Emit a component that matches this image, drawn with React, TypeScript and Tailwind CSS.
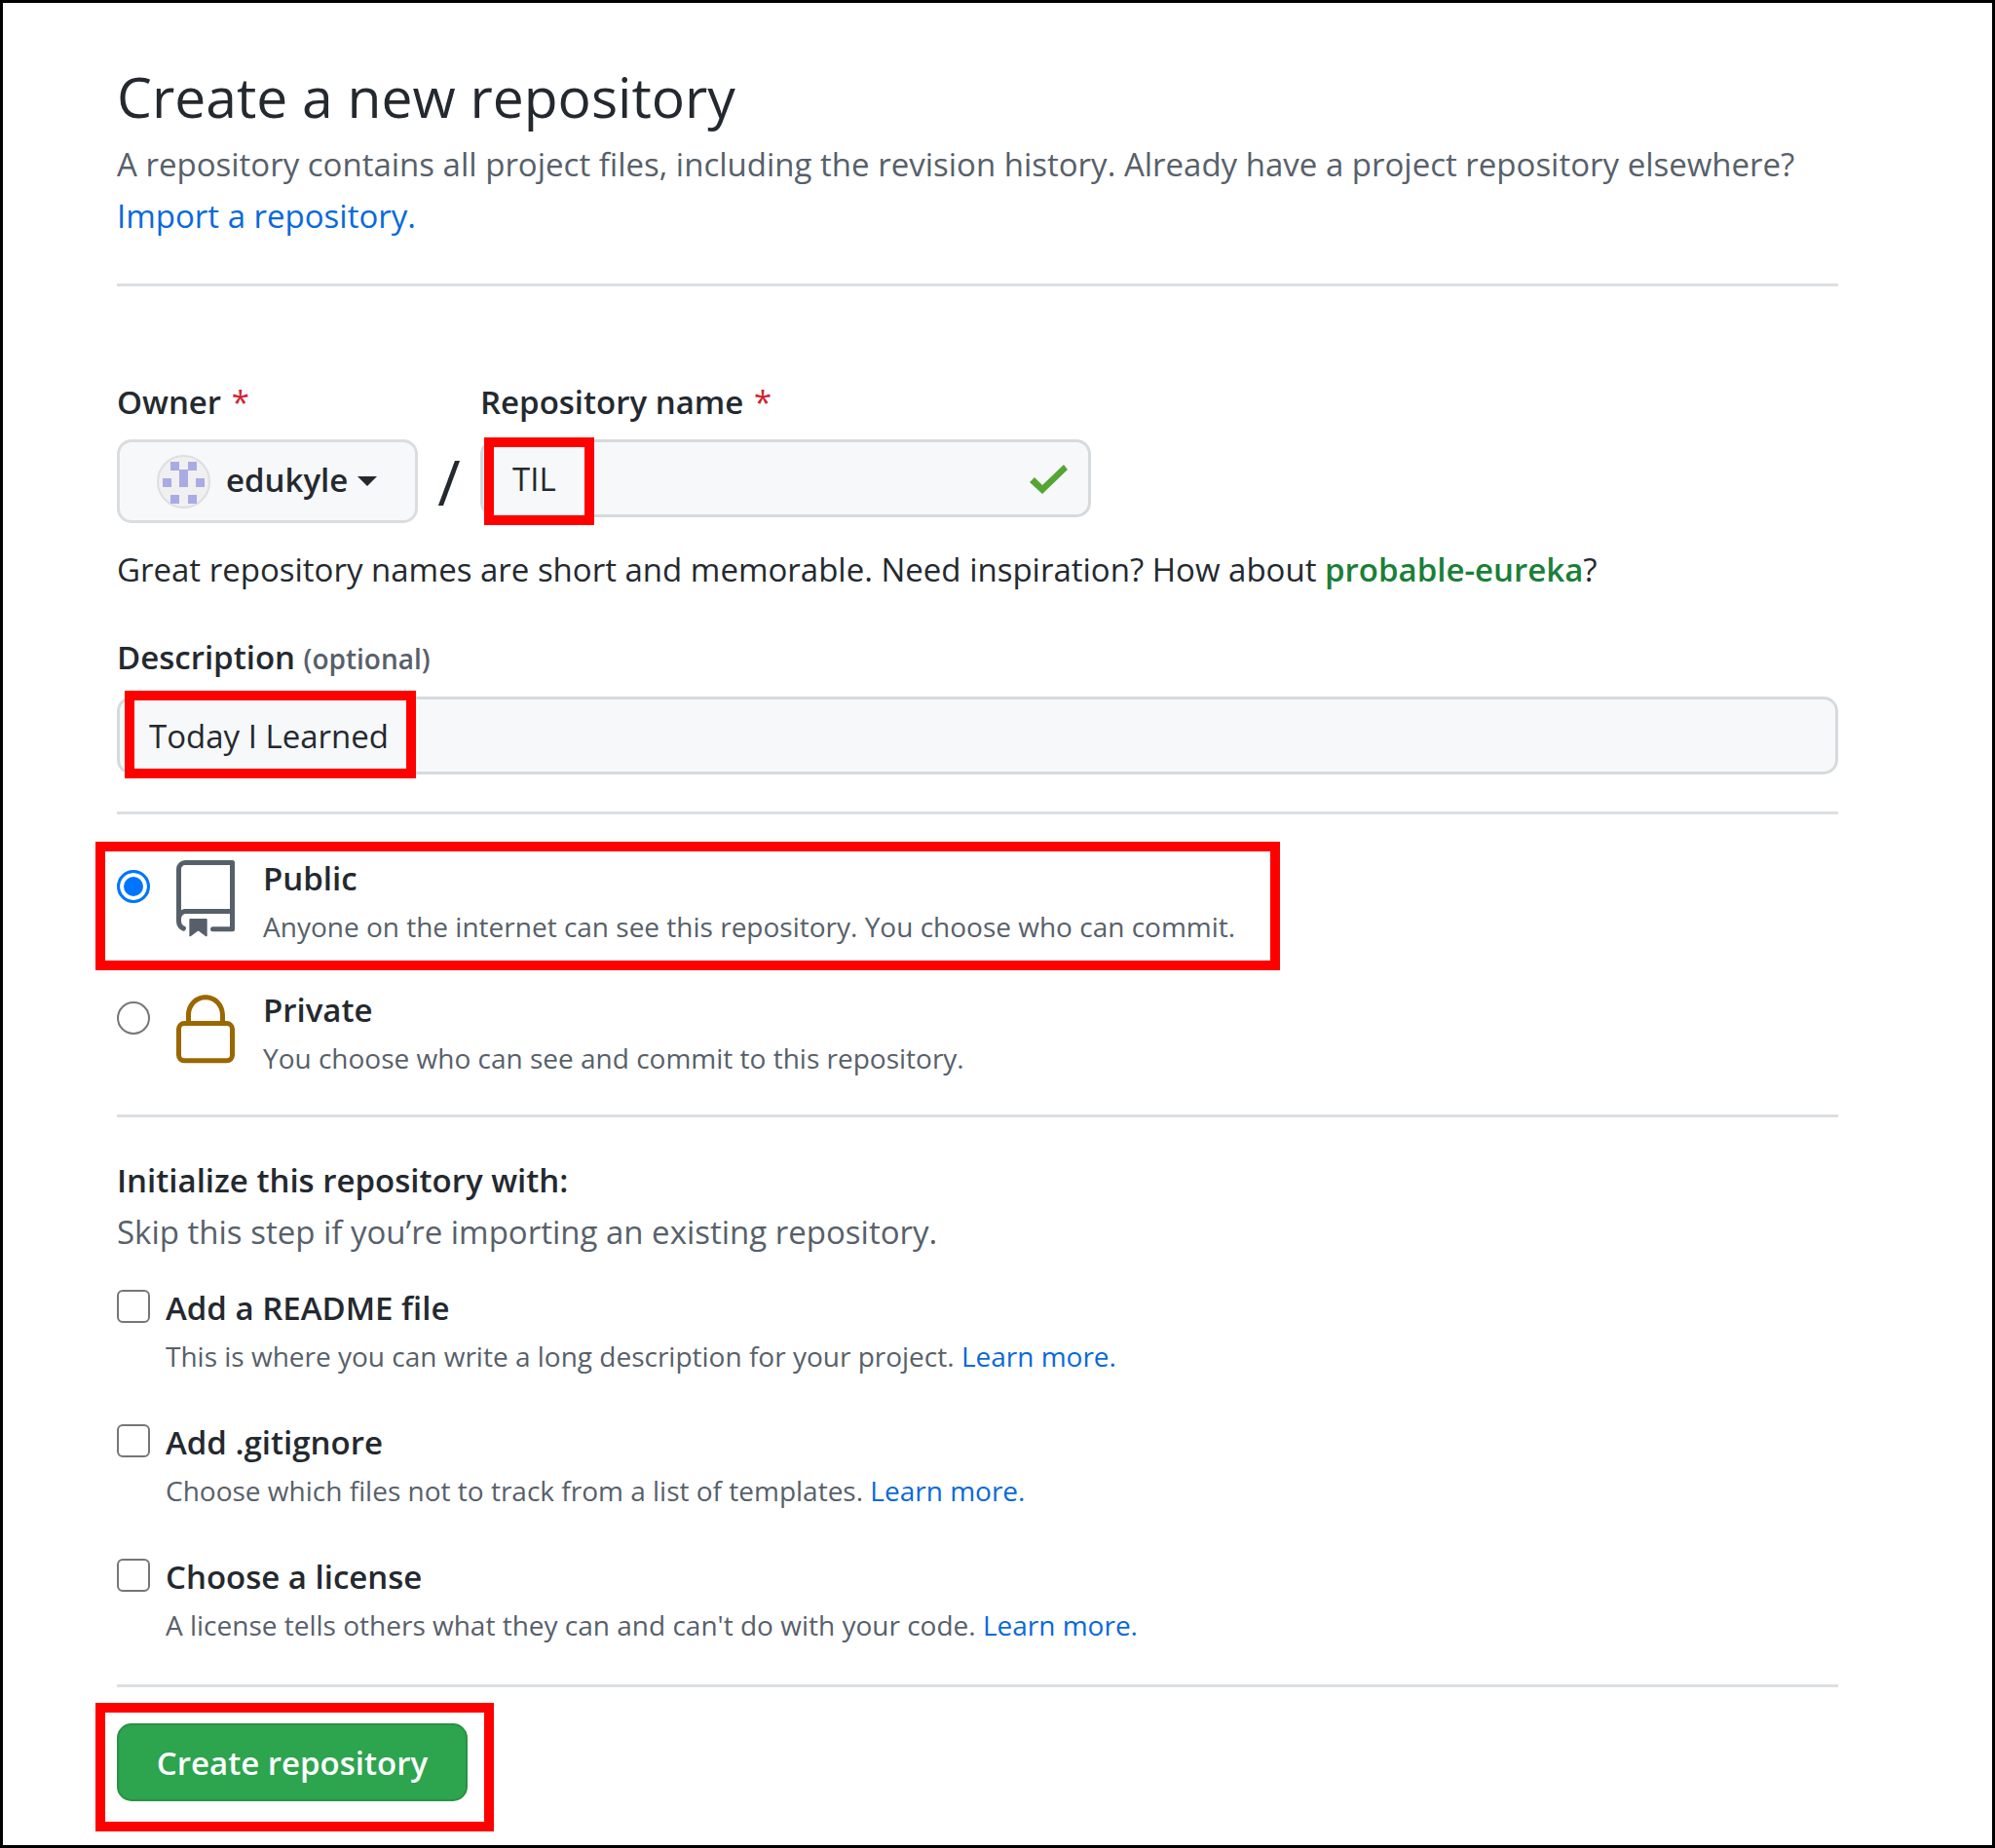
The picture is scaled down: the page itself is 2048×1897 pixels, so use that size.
import React, { useState } from 'react';

const initOptions = [
  {
    id: 'readme',
    label: 'Add a README file',
    note: 'This is where you can write a long description for your project.',
  },
  {
    id: 'gitignore',
    label: 'Add .gitignore',
    note: 'Choose which files not to track from a list of templates.',
  },
  {
    id: 'license',
    label: 'Choose a license',
    note: "A license tells others what they can and can't do with your code.",
  },
];

function RepoIcon() {
  return (
    <svg viewBox="0 0 24 24" className="w-20 h-20 shrink-0 fill-[#57606a]" aria-hidden="true">
      <path
        fillRule="evenodd"
        d="M3 2.75A2.75 2.75 0 015.75 0h14.5a.75.75 0 01.75.75v20.5a.75.75 0 01-.75.75h-6a.75.75 0 010-1.5h5.25v-4H6A1.5 1.5 0 004.5 18v.75c0 .716.43 1.334 1.05 1.605a.75.75 0 01-.6 1.374A3.25 3.25 0 013 18.75v-16zM19.5 1.5V15H6c-.546 0-1.059.146-1.5.401V2.75c0-.69.56-1.25 1.25-1.25H19.5z"
      />
      <path d="M7 18.25a.25.25 0 01.25-.25h5a.25.25 0 01.25.25v5.01a.25.25 0 01-.397.201l-2.206-1.604a.25.25 0 00-.294 0L7.397 23.46a.25.25 0 01-.397-.2v-5.01z" />
    </svg>
  );
}

function LockIcon() {
  return (
    <svg viewBox="0 0 24 24" className="w-20 h-20 shrink-0 fill-[#9a6700]" aria-hidden="true">
      <path
        fillRule="evenodd"
        d="M6 9V7.25C6 3.845 8.503 1 12 1s6 2.845 6 6.25V9h.5a2.5 2.5 0 012.5 2.5v8a2.5 2.5 0 01-2.5 2.5h-13A2.5 2.5 0 013 19.5v-8A2.5 2.5 0 015.5 9H6zm1.5-1.75C7.5 4.58 9.422 2.5 12 2.5c2.578 0 4.5 2.08 4.5 4.75V9h-9V7.25zm-3 4.25a1 1 0 011-1h13a1 1 0 011 1v8a1 1 0 01-1 1h-13a1 1 0 01-1-1v-8z"
      />
    </svg>
  );
}

function Avatar() {
  return (
    <svg viewBox="0 0 55 55" className="w-[55px] h-[55px] shrink-0" aria-hidden="true">
      <circle cx="27.5" cy="27.5" r="26.5" fill="#f0f0f1" stroke="#dcdfe1" strokeWidth="2" />
      <g fill="#a9abe4">
        <rect x="14" y="7" width="9" height="9" />
        <rect x="32" y="7" width="9" height="9" />
        <rect x="23" y="15" width="9" height="18" />
        <rect x="6" y="24" width="9" height="9" />
        <rect x="40" y="24" width="9" height="9" />
        <rect x="14" y="41" width="9" height="9" />
        <rect x="32" y="41" width="9" height="9" />
      </g>
    </svg>
  );
}

function Divider({ className }: { className: string }) {
  return <hr className={`border-0 h-[3px] bg-[#dcdfe2] ${className}`} />;
}

// Red frame drawn over the part of the form to fill in
function Highlight({ className }: { className: string }) {
  return <div className={`absolute border-[10px] border-[#ff0000] pointer-events-none ${className}`} />;
}

export default function App() {
  const [name, setName] = useState('TIL');
  const [description, setDescription] = useState('Today I Learned');
  const [visibility, setVisibility] = useState('public');

  const radioClass =
    'appearance-none w-[34px] h-[34px] mt-4 shrink-0 rounded-full border-2 border-[#767676] checked:border-[3px] checked:border-[#0075ff] checked:bg-[#0075ff] checked:shadow-[inset_0_0_0_4px_#fff]';

  return (
    <main className="min-h-screen border-[3px] border-black bg-white pl-[117px] pr-[158px] pt-[61px] pb-10 font-['Open_Sans','Noto_Sans',sans-serif] text-[33px] leading-[53px] text-[#24292f]">
      <h1 className="text-[57px] leading-[70px] font-normal">Create a new repository</h1>
      <p className="mt-2 text-[#57606a]">
        A repository contains all project files, including the revision history. Already have a project repository
        elsewhere?{' '}
        <a href="#import" className="block text-[#0969da]">Import a repository.</a>
      </p>

      <Divider className="mt-[43px]" />

      <form onSubmit={(e) => e.preventDefault()}>
        <div className="mt-[92px] flex items-start">
          <div className="w-[309px]">
            <label htmlFor="owner" className="block font-semibold">
              Owner <span className="ml-0.5 font-normal text-[#cf222e]">*</span>
            </label>
            <div className="mt-3 h-[86px] flex items-center pl-[38px] border-[3px] border-[#dadde0] rounded-[15px] bg-[#f6f8fa]">
              <Avatar />
              <select
                id="owner"
                className="appearance-none field-sizing-content ml-4 pb-1 bg-transparent font-semibold outline-none"
                defaultValue="edukyle"
              >
                <option value="edukyle">edukyle</option>
              </select>
              <svg viewBox="0 0 20 10" className="ml-2.5 w-5 h-[10px] fill-[#24292f]" aria-hidden="true">
                <path d="M0 0h20L10 10z" />
              </svg>
            </div>
          </div>

          <span className="w-16 mt-[84px] text-center text-[64px] leading-[50px]">/</span>

          <div className="w-[627px]">
            <label htmlFor="repo-name" className="block font-semibold">
              Repository name <span className="ml-0.5 font-normal text-[#cf222e]">*</span>
            </label>
            <div className="relative mt-3">
              <input
                id="repo-name"
                type="text"
                value={name}
                onChange={(e) => setName(e.target.value)}
                className="block w-full h-20 pl-[30px] pr-16 border-[3px] border-[#d6dadd] rounded-[15px] bg-[#f6f8fa] outline-none"
              />
              <svg viewBox="0 0 39 30" className="absolute right-6 top-[26px] w-[39px] h-[30px] fill-[#55a532]" aria-hidden="true">
                <path d="M35 0l4 5-26 25L0 18l5-5 8 8z" />
              </svg>
              <Highlight className="left-1 -top-0.5 w-[113px] h-[90px]" />
            </div>
          </div>
        </div>

        <p className="mt-[21px]">
          Great repository names are short and memorable. Need inspiration? How about{' '}
          <strong className="font-semibold text-[#1a7f37]">probable-eureka</strong>?
        </p>

        <label htmlFor="repo-description" className="mt-[37px] block font-semibold">
          Description <span className="text-[28px] leading-none text-[#57606a]">(optional)</span>
        </label>
        <div className="relative mt-3.5">
          <input
            id="repo-description"
            type="text"
            value={description}
            onChange={(e) => setDescription(e.target.value)}
            className="block w-full h-20 px-[30px] border-[3px] border-[#d6dadd] rounded-[15px] bg-[#f6f8fa] outline-none"
          />
          <Highlight className="left-2 -top-1.5 w-[299px] h-[90px]" />
        </div>

        <Divider className="mt-[38px]" />

        <div className="relative mt-[41px] flex items-start">
          <input
            id="public"
            type="radio"
            name="visibility"
            checked={visibility === 'public'}
            onChange={() => setVisibility('public')}
            className={radioClass}
          />
          <div className="ml-[17px] mt-1.5">
            <RepoIcon />
          </div>
          <div className="ml-[19px]">
            <label htmlFor="public" className="block leading-[50px] font-semibold">Public</label>
            <p className="text-[28px] leading-[48px] text-[#57606a]">
              Anyone on the internet can see this repository. You choose who can commit.
            </p>
          </div>
          <Highlight className="-left-[22px] -top-[13px] w-[1216px] h-[132px]" />
        </div>

        <div className="mt-[37px] flex items-start">
          <input
            id="private"
            type="radio"
            name="visibility"
            checked={visibility === 'private'}
            onChange={() => setVisibility('private')}
            className={radioClass}
          />
          <div className="ml-[17px] mt-1.5">
            <LockIcon />
          </div>
          <div className="ml-[19px]">
            <label htmlFor="private" className="block leading-[50px] font-semibold">Private</label>
            <p className="text-[28px] leading-[48px] text-[#57606a]">
              You choose who can see and commit to this repository.
            </p>
          </div>
        </div>

        <Divider className="mt-[34px]" />

        <h2 className="mt-[38px] font-semibold">Initialize this repository with:</h2>
        <p className="text-[#57606a]">Skip this step if you’re importing an existing repository.</p>

        <div className="mt-[27px] flex flex-col gap-10">
          {initOptions.map((option) => (
            <div key={option.id} className="flex items-start">
              <input
                id={option.id}
                type="checkbox"
                className="appearance-none w-[34px] h-[34px] mt-1.5 shrink-0 border-2 border-[#767676] rounded-md checked:bg-[#0075ff]"
              />
              <div className="ml-4">
                <label htmlFor={option.id} className="block leading-[50px] font-semibold">{option.label}</label>
                <p className="text-[28px] leading-[48px] text-[#57606a]">
                  {option.note} <a href={`#${option.id}`} className="text-[#0969da]">Learn more.</a>
                </p>
              </div>
            </div>
          ))}
        </div>

        <Divider className="mt-[37px]" />

        <div className="relative mt-[37px]">
          <button
            type="submit"
            className="block w-[360px] h-20 rounded-[15px] border-2 border-[#2a9147] bg-[#2da44e] text-white font-semibold"
          >
            Create repository
          </button>
          <Highlight className="-left-[22px] -top-[21px] w-[409px] h-[132px]" />
        </div>
      </form>
    </main>
  );
}
